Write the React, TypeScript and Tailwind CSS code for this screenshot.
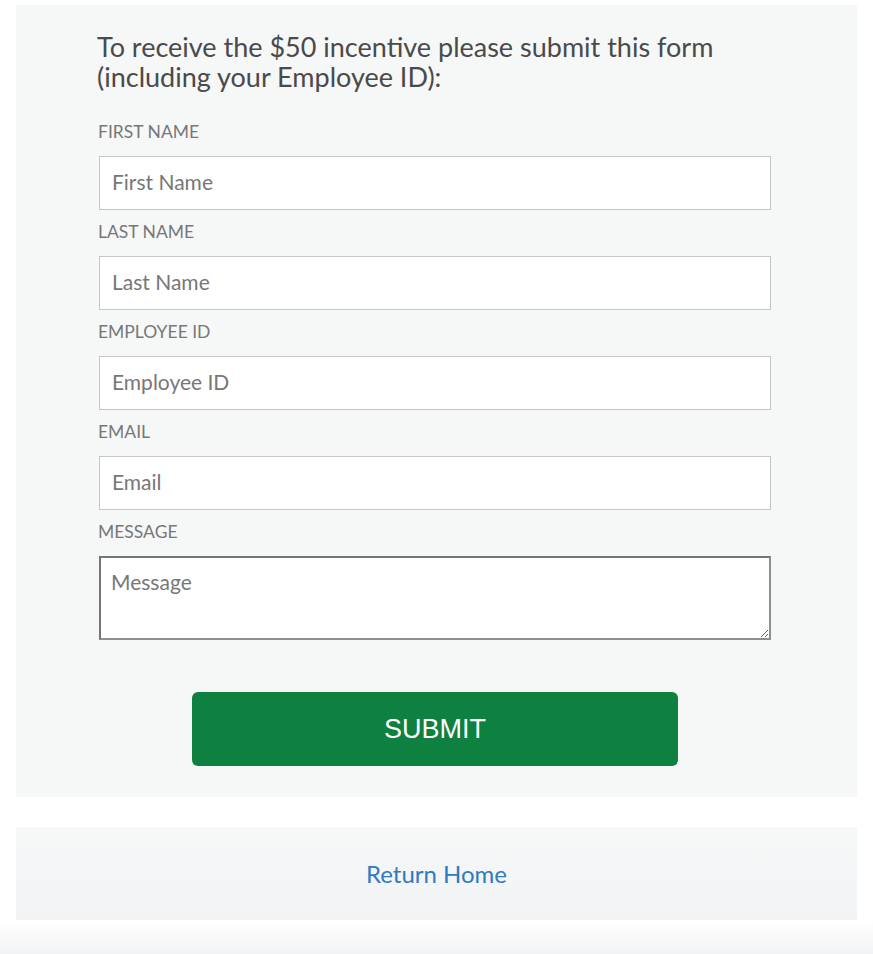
import React, { useState } from "react"

const fields = [
  { label: "FIRST NAME", placeholder: "First Name" },
  { label: "LAST NAME", placeholder: "Last Name" },
  { label: "EMPLOYEE ID", placeholder: "Employee ID" },
  { label: "EMAIL", placeholder: "Email" },
]

const App = () => {
  const [values, setValues] = useState<Record<string, string>>({})

  const onChange = (key: string, value: string) => {
    setValues({ ...values, [key]: value })
  }

  return (
    <div className="min-h-[954px] bg-white font-['Lato','Open_Sans',sans-serif] flex flex-col">
      <div className="px-4 pt-[5px]">
        <div className="bg-[#f6f7f7] pt-[27px] pb-[31px]">
          <div className="w-[672px] ml-[83px]">
            <h1 className="text-[27px] leading-[30px] text-[#4a4a4a] mb-[30px] -ml-[2px]">
              To receive the $50 incentive please submit this form
              <br />
              (including your Employee ID):
            </h1>
            {fields.map((field, i) => (
              <div key={field.label} className={i === 0 ? "" : "mt-[12px]"}>
                <label className="block text-[17.5px] leading-[20px] text-[#777777] mb-[14px] -ml-[1px]">
                  {field.label}
                </label>
                <input
                  type="text"
                  value={values[field.label] || ""}
                  onChange={(e) => onChange(field.label, e.target.value)}
                  placeholder={field.placeholder}
                  className="block w-full h-[54px] bg-white border border-[#c6c6c6] px-3 pb-[3px] text-[21px] text-[#555] placeholder:text-[#777777] outline-none"
                />
              </div>
            ))}
            <div className="mt-[12px]">
              <label className="block text-[17.5px] leading-[20px] text-[#777777] mb-[14px] -ml-[1px]">
                MESSAGE
              </label>
              <textarea
                value={values.message || ""}
                onChange={(e) => onChange("message", e.target.value)}
                placeholder="Message"
                className="block w-full h-[84px] bg-white border-2 border-[#8f8f8f] border-t-[#767676] border-l-[#767676] px-[10px] py-[12px] text-[21px] leading-[24px] text-[#555] placeholder:text-[#777777] outline-none"
              />
            </div>
            <div className="flex justify-center mt-[52px]">
              <button className="w-[486px] h-[74px] rounded-[6px] bg-[#0e8040] text-white text-[27px] font-['Liberation_Sans',Arial,sans-serif]">
                SUBMIT
              </button>
            </div>
          </div>
        </div>
      </div>
      <div className="px-4 mt-[30px]">
        <div className="h-[93px] bg-gradient-to-b from-[#f6f7f7] to-[#f2f3f5] flex items-center justify-center">
          <a href="#" className="text-[24px] text-[#2f7bbf]">
            Return Home
          </a>
        </div>
      </div>
      <div className="flex-1 bg-gradient-to-b from-white to-[#f2f3f5]"></div>
    </div>
  )
}

export default App
